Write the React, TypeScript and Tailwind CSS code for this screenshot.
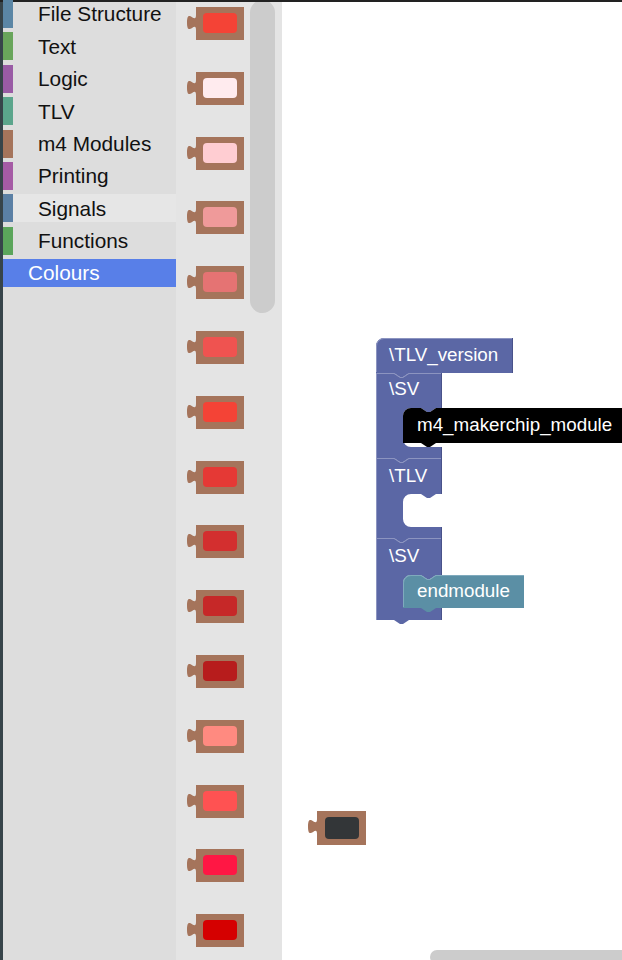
import React from 'react';

const categories = [
  { name: 'File Structure', bar: 'bg-[#5b86a5]' },
  { name: 'Text', bar: 'bg-[#69a55b]' },
  { name: 'Logic', bar: 'bg-[#995ba5]' },
  { name: 'TLV', bar: 'bg-[#5ba58c]' },
  { name: 'm4 Modules', bar: 'bg-[#a5745b]' },
  { name: 'Printing', bar: 'bg-[#a55ba5]' },
  { name: 'Signals', bar: 'bg-[#5b80a5]', hover: true },
  { name: 'Functions', bar: 'bg-[#5ba55b]' },
];

const swatches = [
  '#f44336', '#ffebee', '#ffcdd2', '#ef9a9a', '#e57373',
  '#ef5350', '#f44336', '#e53935', '#d32f2f', '#c62828',
  '#b71c1c', '#ff8a80', '#ff5252', '#ff1744', '#d50000',
];

// value block with an output tab on the left, body starts at x
const valueBlock = (x: number, y: number, w: number, h: number) =>
  `M${x},${y} H${x + w} V${y + h} H${x} V${y + 23} c0,-10 -9,8 -9,-7.5 s9,2.5 9,-7.5 Z`;

const ColourBlock = ({ colour }: { colour: string }) => (
  <svg width="60" height="34" viewBox="0 0 60 34" className="block shrink-0">
    <path d={valueBlock(10, 0, 48, 33)} fill="#a5745b" />
    <rect x="17" y="6" width="34" height="20" rx="4" fill={colour} />
  </svg>
);

const font = { fontFamily: '"Liberation Sans", Arial, sans-serif' };

const Workspace = () => (
  <svg width="340" height="958" viewBox="282 2 340 958" className="absolute inset-0">
    {/* \TLV_version */}
    <path d="M376,346 A8,8 0 0 1 384,338 H513 V373 H409 L403,377 H400 L394,373 H376 Z" fill="#5b67a5" />
    {/* \SV */}
    <path
      d="M376,373 H394 L400,377 H403 L409,373 H442 V408 H436 L430,412 H427 L421,408 H411 A8,8 0 0 0 403,416 V439 A8,8 0 0 0 411,447 H442 V458 H409 L403,462 H400 L394,458 H376 Z"
      fill="#5b67a5"
    />
    {/* \TLV */}
    <path
      d="M376,458 H394 L400,462 H403 L409,458 H442 V494 H436 L430,498 H427 L421,494 H411 A8,8 0 0 0 403,502 V519 A8,8 0 0 0 411,527 H442 V538 H409 L403,542 H400 L394,538 H376 Z"
      fill="#5b67a5"
    />
    {/* \SV */}
    <path
      d="M376,538 H394 L400,542 H403 L409,538 H442 V575 H436 L430,579 H427 L421,575 H411 A8,8 0 0 0 403,583 V600 A8,8 0 0 0 411,608 H442 V620 H409 L403,624 H400 L394,620 H376 Z"
      fill="#5b67a5"
    />
    {/* highlight lines */}
    <g fill="none" stroke="#8c94c0" strokeWidth="1">
      <path d="M376.5,372 V346 A7.5,7.5 0 0 1 384,338.5 H513" />
      <path d="M376,373.5 H394 L400,377.5 H403 L409,373.5 H442" />
      <path d="M376,458.5 H394 L400,462.5 H403 L409,458.5 H442" />
      <path d="M376,538.5 H394 L400,542.5 H403 L409,538.5 H442" />
      <path d="M376.5,373 V620" />
    </g>
    <g fill="none" stroke="#49528a" strokeWidth="1">
      <path d="M441.5,373 V408 M441.5,447 V494 M441.5,527 V575 M441.5,608 V620 M512.5,338 V373" />
    </g>

    {/* m4_makerchip_module */}
    <path
      d="M403,416 A8,8 0 0 1 411,408 H421 L427,412 H430 L436,408 H626 V443 H436 L430,447 H427 L421,443 H403 Z"
      fill="#000"
    />
    {/* endmodule */}
    <path
      d="M403,583 A8,8 0 0 1 411,575 H421 L427,579 H430 L436,575 H524 V608 H436 L430,612 H427 L421,608 H403 Z"
      fill="#5b8fa5"
    />
    <path d="M403.5,607 V583 A7.5,7.5 0 0 1 411,575.5 H421 L427,579.5 H430 L436,575.5 H524" fill="none" stroke="#7faabd" />

    <g fill="#fff" fontSize="18.8" style={font}>
      <text x="389" y="361">\TLV_version</text>
      <text x="389" y="395">\SV</text>
      <text x="417" y="431">m4_makerchip_module</text>
      <text x="389" y="482">\TLV</text>
      <text x="389" y="562">\SV</text>
      <text x="417" y="597">endmodule</text>
    </g>

    {/* loose colour block */}
    <path d={valueBlock(317, 811, 49, 34)} fill="#a5745b" />
    <rect x="325" y="817" width="34" height="22" rx="4" fill="#333638" />
  </svg>
);

export default function App() {
  return (
    <div className="w-[622px] h-[960px] flex flex-col overflow-hidden bg-white" style={font}>
      <div className="h-[2px] shrink-0 bg-[#222]" />
      <div className="flex h-[958px]">
        <div className="w-[3px] shrink-0 bg-[#37444a]" />

        <aside className="w-[173px] shrink-0 bg-[#dddddd]">
          <ul className="-mt-[2px] flex flex-col">
            {categories.map((c) => (
              <li key={c.name} className="flex h-[28px] mb-[4.375px]">
                <span className={`w-[10px] shrink-0 ${c.bar}`} />
                <span
                  className={`flex-1 flex items-center pl-[25px] text-[20.8px] text-[#111] ${
                    c.hover ? 'bg-[#e6e6e6]' : ''
                  }`}
                >
                  {c.name}
                </span>
              </li>
            ))}
            <li className="flex items-center h-[28px] pl-[25px] bg-[#587fe8] text-[20.8px] text-white">
              Colours
            </li>
          </ul>
        </aside>

        <div className="relative w-[106px] shrink-0 bg-[#e4e4e4] overflow-hidden">
          <div className="flex flex-col gap-[30.8px] pt-[5px] pl-[10px]">
            {swatches.map((s, i) => (
              <ColourBlock key={i} colour={s} />
            ))}
          </div>
          <div className="absolute left-[74px] -top-[2px] w-[25px] h-[313px] rounded-full bg-[#cccccc]" />
        </div>

        <main className="relative flex-1 bg-white overflow-hidden">
          <Workspace />
          <div className="absolute left-[148px] top-[948px] w-[220px] h-[14px] rounded-full bg-[#cccccc]" />
        </main>
      </div>
    </div>
  );
}
